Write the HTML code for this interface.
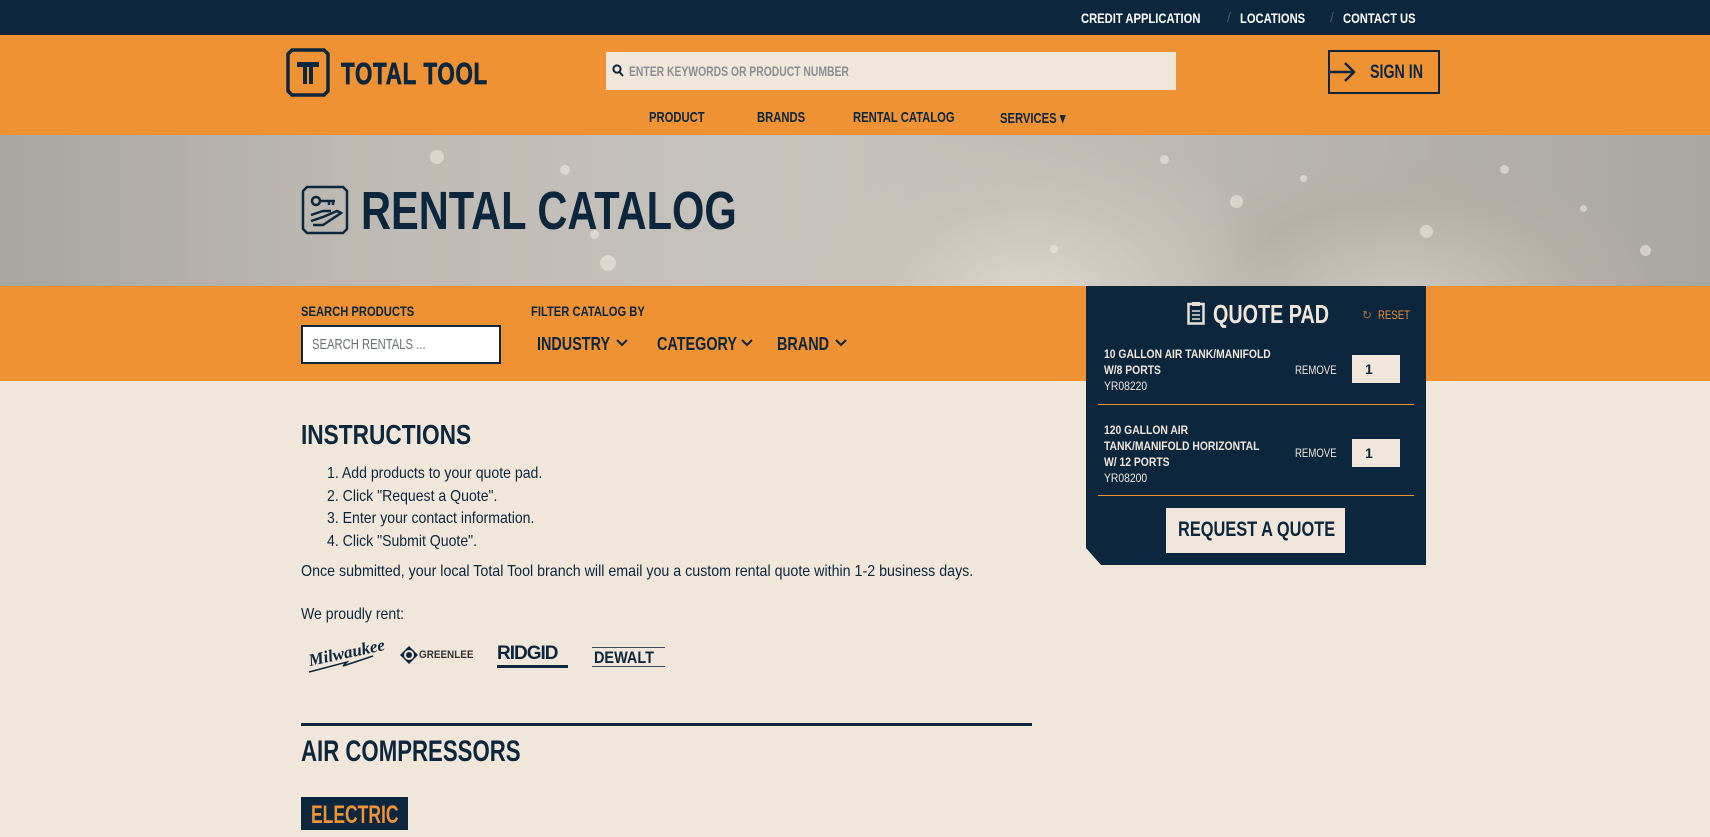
<!DOCTYPE html>
<html><head><meta charset="utf-8"><style>
*{margin:0;padding:0;box-sizing:border-box}
body{width:1710px;height:837px;overflow:hidden;background:#f0e6da;font-family:"Liberation Sans",sans-serif;color:#0b263d;position:relative}
.a{position:absolute;white-space:nowrap}
.n{display:inline-block;transform-origin:0 50%}
.b{font-weight:bold}
.d{position:absolute;border-radius:50%;background:#ece8e0;opacity:.6}
</style></head><body>
<div class="a" style="left:0;top:0;width:1710px;height:35px;background:#0b263d"></div>
<div class="a b" style="left:1081px;top:10px;color:#fff;font-size:14px"><span class="n" style="transform:scaleX(.8)">CREDIT APPLICATION</span></div>
<div class="a" style="left:1227px;top:9px;color:#4a5a6a;font-size:14px">/</div>
<div class="a b" style="left:1240px;top:10px;color:#fff;font-size:14px"><span class="n" style="transform:scaleX(.8)">LOCATIONS</span></div>
<div class="a" style="left:1330px;top:9px;color:#4a5a6a;font-size:14px">/</div>
<div class="a b" style="left:1343px;top:10px;color:#fff;font-size:14px"><span class="n" style="transform:scaleX(.8)">CONTACT US</span></div>

<div class="a" style="left:0;top:35px;width:1710px;height:100px;background:#ef9233"></div>
<svg class="a" style="left:286px;top:48px" width="44" height="49" viewBox="0 0 44 49"><path d="M6 2H38L42 6V43L38 47H6L2 43V6Z" fill="none" stroke="#0b263d" stroke-width="3.5"/><path d="M11 14H33V19H27V36H23V19H21V36H17V19H11Z" fill="#0b263d"/></svg>
<div class="a b" style="left:341px;top:56px;font-size:31px;letter-spacing:1px;-webkit-text-stroke:.8px #0b263d"><span class="n" style="transform:scaleX(.72)">TOTAL TOOL</span></div>
<div class="a" style="left:606px;top:52px;width:570px;height:38px;background:#f0e6da"></div>
<svg class="a" style="left:612px;top:64px" width="12" height="13" viewBox="0 0 12 13"><circle cx="5" cy="5" r="3.6" fill="none" stroke="#0b263d" stroke-width="2"/><path d="M7.5 8L11 12" stroke="#0b263d" stroke-width="2"/></svg>
<div class="a b" style="left:629px;top:63px;color:#8a8f93;font-size:14px"><span class="n" style="transform:scaleX(.74)">ENTER KEYWORDS OR PRODUCT NUMBER</span></div>
<div class="a" style="left:1328px;top:50px;width:112px;height:44px;border:2px solid #0b263d"></div>
<svg class="a" style="left:1328px;top:61px" width="30" height="22" viewBox="0 0 30 22"><path d="M1 11H26M17 2L26 11L17 20" fill="none" stroke="#0b263d" stroke-width="2.5"/></svg>
<div class="a b" style="left:1370px;top:62px;font-size:19px"><span class="n" style="transform:scaleX(.75)">SIGN IN</span></div>
<div class="a b" style="left:649px;top:109px;font-size:15px"><span class="n" style="transform:scaleX(.75)">PRODUCT</span></div>
<div class="a b" style="left:757px;top:109px;font-size:15px"><span class="n" style="transform:scaleX(.75)">BRANDS</span></div>
<div class="a b" style="left:853px;top:109px;font-size:15px"><span class="n" style="transform:scaleX(.75)">RENTAL CATALOG</span></div>
<div class="a b" style="left:1000px;top:109px;font-size:15px"><span class="n" style="transform:scaleX(.75)">SERVICES ▾</span></div>

<div class="a" style="left:0;top:135px;width:1710px;height:151px;overflow:hidden;background:radial-gradient(ellipse 260px 180px at 1030px 170px,#dcd8d0 0,#c6c2ba 60%,transparent 100%),radial-gradient(ellipse 260px 160px at 1400px 180px,#cfcbc3 0,#b5b0a8 70%,transparent 100%),linear-gradient(90deg,#a9a59f,#bdb9b2 20%,#c8c4bd 45%,#bcb8b1 70%,#aaa6a0)">
<div class="d" style="left:430px;top:15px;width:14px;height:14px"></div>
<div class="d" style="left:560px;top:30px;width:10px;height:10px"></div>
<div class="d" style="left:600px;top:120px;width:16px;height:16px"></div>
<div class="d" style="left:590px;top:95px;width:9px;height:9px"></div>
<div class="d" style="left:1160px;top:20px;width:9px;height:9px"></div>
<div class="d" style="left:1230px;top:60px;width:13px;height:13px"></div>
<div class="d" style="left:1300px;top:40px;width:7px;height:7px"></div>
<div class="d" style="left:1420px;top:90px;width:13px;height:13px"></div>
<div class="d" style="left:1500px;top:30px;width:9px;height:9px"></div>
<div class="d" style="left:1640px;top:110px;width:11px;height:11px"></div>
<div class="d" style="left:1580px;top:70px;width:7px;height:7px"></div>
<div class="d" style="left:1050px;top:110px;width:8px;height:8px"></div>
</div>
<svg class="a" style="left:301px;top:185px" width="48" height="50" viewBox="0 0 48 50"><path d="M6 2H42L46 6V44L42 48H6L2 44V6Z" fill="none" stroke="#0b263d" stroke-width="2.5"/><circle cx="15" cy="16" r="4" fill="none" stroke="#0b263d" stroke-width="2.5"/><path d="M19 16H34M28 16V20M32 16V20M10 30L22 26H30M10 36L22 32L36 26L40 28L22 40H12" fill="none" stroke="#0b263d" stroke-width="2.5"/></svg>
<div class="a b" style="left:361px;top:180px;font-size:54px"><span class="n" style="transform:scaleX(.77)">RENTAL CATALOG</span></div>

<div class="a" style="left:0;top:286px;width:1710px;height:95px;background:#ef9233"></div>
<div class="a b" style="left:301px;top:303px;font-size:14px"><span class="n" style="transform:scaleX(.8)">SEARCH PRODUCTS</span></div>
<div class="a" style="left:301px;top:325px;width:200px;height:39px;background:#fff;border:2px solid #0b263d"></div>
<div class="a" style="left:312px;top:336px;color:#6b6f73;font-size:15px"><span class="n" style="transform:scaleX(.75)">SEARCH RENTALS ...</span></div>
<div class="a b" style="left:531px;top:303px;font-size:14px"><span class="n" style="transform:scaleX(.8)">FILTER CATALOG BY</span></div>
<div class="a b" style="left:537px;top:334px;font-size:18px"><span class="n" style="transform:scaleX(.8)">INDUSTRY</span></div>
<div class="a b" style="left:657px;top:334px;font-size:18px"><span class="n" style="transform:scaleX(.8)">CATEGORY</span></div>
<div class="a b" style="left:777px;top:334px;font-size:18px"><span class="n" style="transform:scaleX(.8)">BRAND</span></div>
<svg class="a" style="left:615px;top:338px" width="14" height="9"><path d="M2 2L7 7L12 2" fill="none" stroke="#0b263d" stroke-width="2"/></svg>
<svg class="a" style="left:740px;top:338px" width="14" height="9"><path d="M2 2L7 7L12 2" fill="none" stroke="#0b263d" stroke-width="2"/></svg>
<svg class="a" style="left:834px;top:338px" width="14" height="9"><path d="M2 2L7 7L12 2" fill="none" stroke="#0b263d" stroke-width="2"/></svg>

<div class="a" style="left:1086px;top:286px;width:340px;height:279px;background:#0b263d;clip-path:polygon(0 0,100% 0,100% 100%,15px 100%,0 262px)"></div>
<svg class="a" style="left:1187px;top:301px" width="18" height="24" viewBox="0 0 18 24"><rect x="1.5" y="3" width="15" height="19.5" fill="none" stroke="#e8e0d5" stroke-width="2.5"/><rect x="5" y="1" width="8" height="4" fill="#e8e0d5"/><path d="M5 10H13M5 14H13M5 18H13" stroke="#e8e0d5" stroke-width="1.5"/></svg>
<div class="a b" style="left:1213px;top:299px;color:#f0e6da;font-size:26px"><span class="n" style="transform:scaleX(.76)">QUOTE PAD</span></div>
<div class="a" style="left:1362px;top:308px;color:#a0703a;font-size:12px">↻</div>
<div class="a" style="left:1378px;top:308px;color:#ef9233;font-size:12px"><span class="n" style="transform:scaleX(.8)">RESET</span></div>
<div class="a b" style="left:1104px;top:347px;color:#f0e6da;font-size:11.5px;line-height:16px"><span class="n" style="transform:scaleX(.9)">10 GALLON AIR TANK/MANIFOLD<br>W/8 PORTS<br><span style="font-weight:normal">YR08220</span></span></div>
<div class="a" style="left:1295px;top:363px;color:#f0e6da;font-size:12px"><span class="n" style="transform:scaleX(.8)">REMOVE</span></div>
<div class="a b" style="left:1352px;top:355px;width:48px;height:28px;background:#f0e6da;font-size:14px;padding:6px 0 0 13px">1</div>
<div class="a" style="left:1098px;top:404px;width:316px;height:1px;background:#ef9233"></div>
<div class="a b" style="left:1104px;top:423px;color:#f0e6da;font-size:11.5px;line-height:16px"><span class="n" style="transform:scaleX(.9)">120 GALLON AIR<br>TANK/MANIFOLD HORIZONTAL<br>W/ 12 PORTS<br><span style="font-weight:normal">YR08200</span></span></div>
<div class="a" style="left:1295px;top:446px;color:#f0e6da;font-size:12px"><span class="n" style="transform:scaleX(.8)">REMOVE</span></div>
<div class="a b" style="left:1352px;top:439px;width:48px;height:28px;background:#f0e6da;font-size:14px;padding:6px 0 0 13px">1</div>
<div class="a" style="left:1098px;top:495px;width:316px;height:1px;background:#ef9233"></div>
<div class="a" style="left:1166px;top:508px;width:179px;height:45px;background:#f0e6da"></div>
<div class="a b" style="left:1178px;top:518px;font-size:21px"><span class="n" style="transform:scaleX(.78)">REQUEST A QUOTE</span></div>

<div class="a b" style="left:301px;top:419px;font-size:28px"><span class="n" style="transform:scaleX(.81)">INSTRUCTIONS</span></div>
<div class="a" style="left:327px;top:463px;font-size:16px;line-height:22.6px"><span class="n" style="transform:scaleX(.88)">1. Add products to your quote pad.<br>2. Click "Request a Quote".<br>3. Enter your contact information.<br>4. Click "Submit Quote".</span></div>
<div class="a" style="left:301px;top:563px;font-size:16px"><span class="n" style="transform:scaleX(.89)">Once submitted, your local Total Tool branch will email you a custom rental quote within 1-2 business days.</span></div>
<div class="a" style="left:301px;top:606px;font-size:16px"><span class="n" style="transform:scaleX(.88)">We proudly rent:</span></div>
<div class="a b" style="left:308px;top:643px;font-size:17px;font-style:italic;font-family:'Liberation Serif',serif;transform:rotate(-12deg)">Milwaukee</div>
<svg class="a" style="left:307px;top:652px" width="70" height="22"><path d="M2 20L40 10L36 14L66 4" fill="none" stroke="#0b263d" stroke-width="1.5"/></svg>
<svg class="a" style="left:399px;top:645px" width="20" height="20"><path d="M10 1L19 10L10 19L1 10Z" fill="#0b263d"/><circle cx="10" cy="10" r="5" fill="#f0e6da"/><circle cx="10" cy="10" r="3" fill="#0b263d"/></svg>
<div class="a b" style="left:419px;top:649px;font-size:11px;color:#333"><span class="n" style="transform:scaleX(.9)">GREENLEE</span></div>
<div class="a b" style="left:497px;top:643px;font-size:19px;letter-spacing:-1px">RIDGID</div>
<div class="a" style="left:497px;top:665px;width:71px;height:3px;background:#0b263d"></div>
<div class="a" style="left:592px;top:647px;width:73px;height:20px;border-top:1px solid #3a4a5a;border-bottom:1px solid #3a4a5a"></div>
<div class="a b" style="left:594px;top:648px;font-size:17px;color:#0b263d"><span class="n" style="transform:scaleX(.85)">DEWALT</span></div>

<div class="a" style="left:301px;top:723px;width:731px;height:3px;background:#0b263d"></div>
<div class="a b" style="left:301px;top:735px;font-size:30px"><span class="n" style="transform:scaleX(.74)">AIR COMPRESSORS</span></div>
<div class="a" style="left:301px;top:797px;width:107px;height:33px;background:#0b263d"></div>
<div class="a b" style="left:311px;top:801px;font-size:25px;color:#ef9233"><span class="n" style="transform:scaleX(.7)">ELECTRIC</span></div>
</body></html>
